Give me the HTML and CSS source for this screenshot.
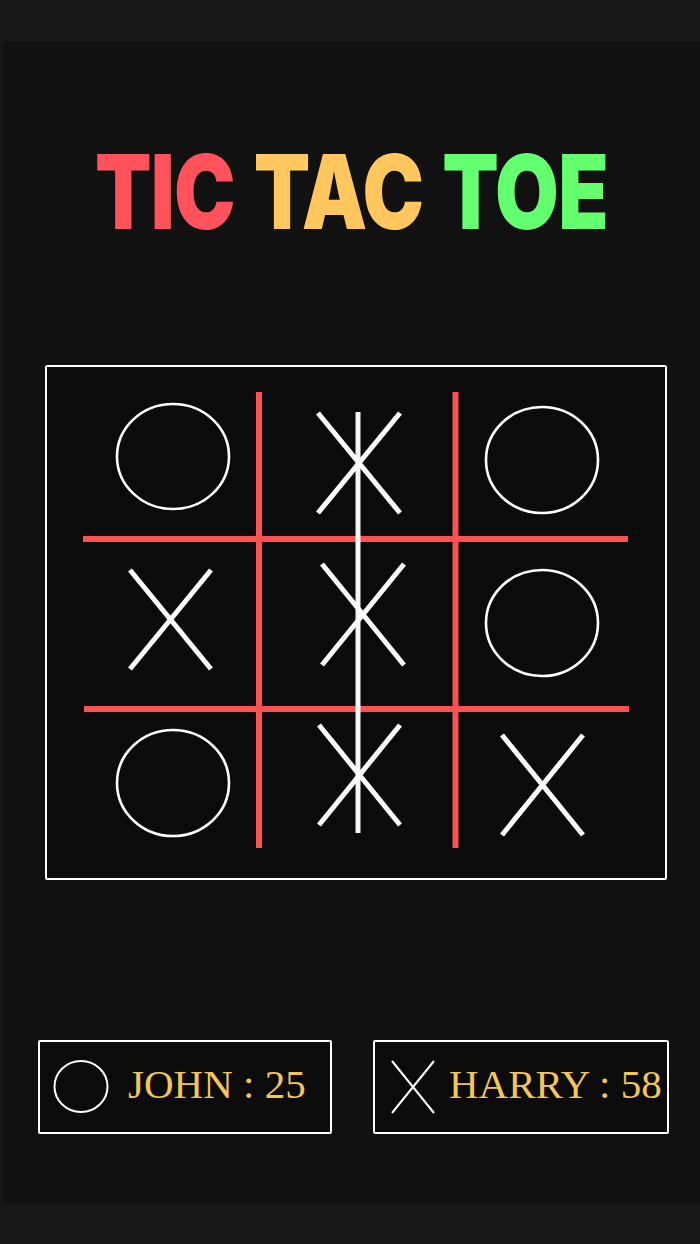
FILE: index.html
```html
<!DOCTYPE html>
<html lang="en">
<head>
    <meta charset="UTF-8">
    <meta name="viewport" content="width=device-width, initial-scale=1.0">
    <title>Tic Tac Toe</title>
    <link rel="stylesheet" href="styles.css">
</head>
<body>

    <main class="screen">

        <h1 class="title">
            <span class="word red">TIC</span>
            <span class="word yellow">TAC</span>
            <span class="word green">TOE</span>
        </h1>

        <!-- Board: grid lines, marks and the winning line -->
        <div class="board">
            <svg class="board-canvas" width="618" height="511" viewBox="0 0 618 511">
                <g class="grid">
                    <rect x="209" y="25" width="6" height="456"/>
                    <rect x="405.5" y="25" width="6" height="456"/>
                    <rect x="36" y="169" width="545" height="6"/>
                    <rect x="37" y="339" width="545" height="6"/>
                </g>
                <g class="mark-o">
                    <ellipse cx="126" cy="89.5" rx="56" ry="52.5"/>
                    <ellipse cx="495" cy="93" rx="56" ry="53"/>
                    <ellipse cx="495" cy="256" rx="56" ry="53"/>
                    <ellipse cx="126" cy="416" rx="56" ry="53"/>
                </g>
                <g class="mark-x">
                    <path d="M271 46 L353 146 M271 146 L353 46"/>
                    <path d="M83 203 L164 302 M83 302 L164 203"/>
                    <path d="M275 197 L357 298 M275 298 L357 197"/>
                    <path d="M272 358 L353 458 M272 458 L353 358"/>
                    <path d="M455 368 L536 468 M455 468 L536 368"/>
                </g>
                <rect class="win-line" x="308.5" y="45" width="5" height="421"/>
            </svg>
        </div>

        <div class="scores">
            <div class="score-card">
                <svg class="score-icon" width="58" height="56" viewBox="0 0 58 56">
                    <ellipse cx="28" cy="27.5" rx="26.5" ry="25.5"/>
                </svg>
                <span class="score-text">JOHN : 25</span>
            </div>
            <div class="score-card wide">
                <svg class="score-icon" width="46" height="56" viewBox="0 0 46 56">
                    <path d="M2 2 L44 54 M2 54 L44 2"/>
                </svg>
                <span class="score-text">HARRY : 58</span>
            </div>
        </div>

    </main>

</body>
</html>
```

FILE: styles.css
```css
/* General styles */
body {
    margin: 0;
    padding: 0;
    background: #171717;
    font-family: 'Liberation Serif', serif;
}

.screen {
    margin: 42px 0 0 3px;
    height: 1161px;
    background: #111111;
    overflow: hidden;
}

/* Title */
.title {
    margin: 98px 0 0;
    height: 110px;
    font-family: 'Inter', sans-serif;
    font-weight: 900;
    font-size: 103px;
    line-height: 1;
    text-align: center;
    white-space: nowrap;
    letter-spacing: -1px;
    word-spacing: 4px;
    transform: scaleX(0.8);
}

.red { color: #ff525a; }
.yellow { color: #ffc75e; }
.green { color: #63ff6f; }

/* Board */
.board {
    margin: 115px 0 0 42px;
    width: 618px;
    height: 511px;
    border: 2px solid #ffffff;
    border-radius: 2px;
    background: #0b0b0b;
}

.board-canvas {
    display: block;
}

.grid rect {
    fill: #ff5052;
}

.mark-o ellipse {
    fill: none;
    stroke: #ffffff;
    stroke-width: 2.6;
}

.mark-x path {
    fill: none;
    stroke: #ffffff;
    stroke-width: 5;
}

.win-line {
    fill: #ffffff;
    opacity: 0.96;
}

/* Score cards */
.scores {
    display: flex;
    gap: 41px;
    margin: 160px 0 0 35px;
}

.score-card {
    display: flex;
    align-items: center;
    box-sizing: border-box;
    width: 294px;
    height: 94px;
    border: 2px solid #ffffff;
    border-radius: 2px;
    background: #0b0b0b;
    padding: 0 0 6px 13px;
}

.score-card .score-text {
    margin-left: 17px;
}

.score-card.wide {
    width: 296px;
    padding-left: 15px;
}

.score-card.wide .score-text {
    margin-left: 13px;
}

.score-icon {
    margin-top: 6px;
}

.score-icon ellipse,
.score-icon path {
    fill: none;
    stroke: #ffffff;
    stroke-width: 2;
}

.score-text {
    color: #f4c55a;
    font-size: 41px;
    line-height: 1;
    white-space: nowrap;
}
```
